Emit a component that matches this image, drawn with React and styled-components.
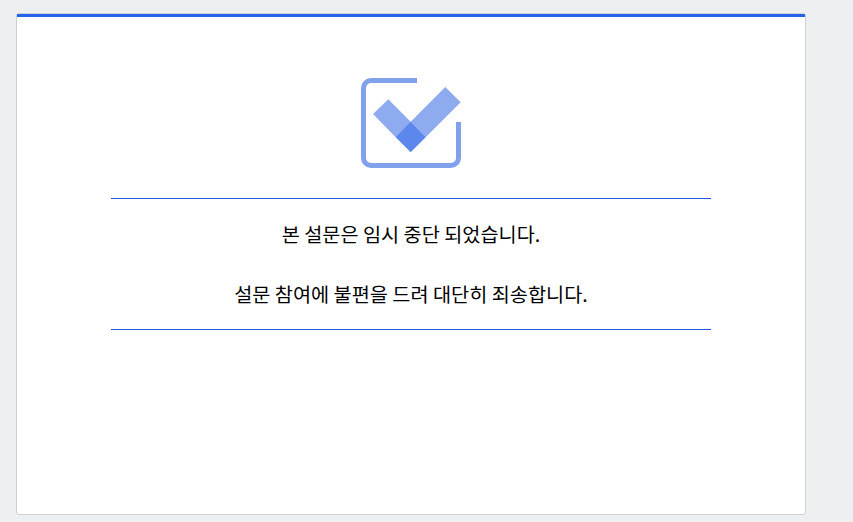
import styled, { createGlobalStyle } from "styled-components";

const GlobalStyle = createGlobalStyle`
  html, body {
    margin: 0;
    padding: 0;
    height: 100%;
    background-color: #eeeff1;
    overflow: hidden;
  }
  body {
    font-family: "Noto Sans CJK KR", "Liberation Sans", sans-serif;
  }
`;

const Page = styled.div`
  padding: 13px 0 0 16px;
`;

const Card = styled.main`
  box-sizing: border-box;
  display: flex;
  flex-direction: column;
  align-items: center;
  width: 790px;
  height: 502px;
  background-color: #fff;
  border: 1px solid #cfd0d2;
  border-radius: 3px;
`;

const TopBar = styled.div`
  align-self: stretch;
  height: 3px;
  background-color: #2563eb;
`;

const Logo = styled.svg`
  display: block;
  width: 100px;
  height: 90px;
  margin-top: 61px;
`;

const Message = styled.section`
  box-sizing: border-box;
  display: flex;
  flex-direction: column;
  gap: 34px;
  width: 600px;
  margin-top: 30px;
  padding: 22px 0 22px;
  border-top: 1px solid #2158d8;
  border-bottom: 1px solid #2158d8;
  text-align: center;
`;

const MessageLine = styled.p`
  margin: 0;
  font-size: 19.7px;
  line-height: 26px;
  color: #000;
`;

const CheckLogo = () => (
  <Logo viewBox="0 0 100 90">
    <path
      d="M56 2.5H10A7.5 7.5 0 0 0 2.5 10V80A7.5 7.5 0 0 0 10 87.5H90A7.5 7.5 0 0 0 97.5 80V44"
      fill="none"
      stroke="#81a1ec"
      strokeWidth="5"
    />
    <path d="M12 36L27.3 21.3L49.7 43.7L64.7 59.3H34.7Z" fill="#8fabf0" />
    <path d="M49.7 43.7L84.3 9L99.7 24.3L64.7 59.3Z" fill="#8fabf0" />
    <path d="M49.7 43.7L64.7 59.3L49.7 74.3L34.7 59.3Z" fill="#5c88ee" />
  </Logo>
);

export default function App() {
  return (
    <>
      <GlobalStyle />
      <Page>
        <Card>
          <TopBar />
          <CheckLogo />
          <Message>
            <MessageLine>본 설문은 임시 중단 되었습니다.</MessageLine>
            <MessageLine>설문 참여에 불편을 드려 대단히 죄송합니다.</MessageLine>
          </Message>
        </Card>
      </Page>
    </>
  );
}
